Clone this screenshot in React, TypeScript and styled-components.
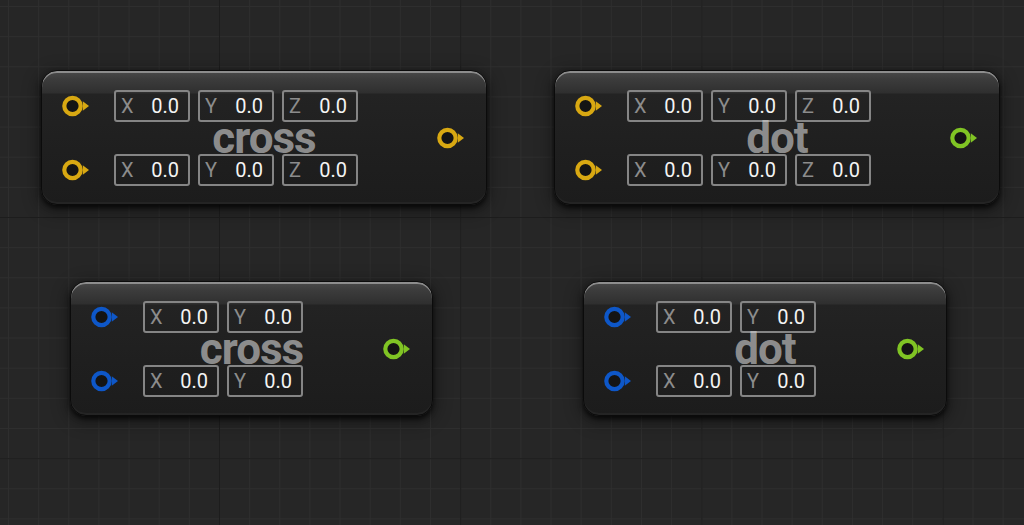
import React from "react";
import styled, { createGlobalStyle } from "styled-components";

const GlobalStyle = createGlobalStyle`
  html, body {
    margin: 0;
    padding: 0;
    background: #262626;
  }
  * { box-sizing: border-box; }
`;

const Canvas = styled.div`
  position: relative;
  width: 1024px;
  height: 525px;
  overflow: hidden;
  background-color: #262626;
  background-image:
    linear-gradient(to right, #1d1d1d 1px, transparent 1px),
    linear-gradient(to bottom, #1d1d1d 1px, transparent 1px),
    linear-gradient(to right, #2e2e2e 1px, transparent 1px),
    linear-gradient(to bottom, #2e2e2e 1px, transparent 1px);
  background-size:
    241.2px 100%,
    100% 241.2px,
    30.15px 100%,
    100% 30.15px;
  background-position:
    219px 0,
    0 217px,
    8px 0,
    0 6px;
  font-family: Roboto, "Liberation Sans", sans-serif;
`;

const GraphNode = styled.div<{ $x: number; $y: number; $w: number }>`
  position: absolute;
  left: ${(p) => p.$x}px;
  top: ${(p) => p.$y}px;
  width: ${(p) => p.$w}px;
  height: 135px;
  border-radius: 16px;
  border: 1px solid #0b0b0b;
  background: linear-gradient(
    to bottom,
    #4a4a4a 0px,
    #3c3c3c 8px,
    #2f2f2f 22px,
    #232323 23px,
    #1f1f1f 60%,
    #1c1c1c 100%
  );
  box-shadow:
    inset 0 2px 0 rgba(210, 210, 210, 0.5),
    inset 0 -2px 1px rgba(255, 255, 255, 0.04),
    0 3px 5px rgba(0, 0, 0, 0.7),
    0 4px 16px 4px rgba(0, 0, 0, 0.3);
  display: flex;
  align-items: center;
  padding: 0 21px 0 20px;
`;

const Inputs = styled.div`
  display: flex;
  flex-direction: column;
  gap: 32px;
`;

const InputRow = styled.div`
  display: flex;
  align-items: center;
`;

const Fields = styled.div`
  display: flex;
  gap: 8px;
  margin-left: 24px;
`;

const Field = styled.div`
  width: 76px;
  height: 32px;
  border: 2px solid #858585;
  border-radius: 3px;
  display: flex;
  align-items: center;
  justify-content: space-between;
  padding: 0 9px 0 5px;
  font-size: 20px;
  line-height: 1;
`;

const FieldLabel = styled.span`
  color: #8c8c8c;
`;

const FieldValue = styled.span`
  color: #f4f4f4;
`;

const Spacer = styled.div`
  flex: 1;
`;

const Title = styled.div`
  position: absolute;
  inset: 0;
  display: flex;
  align-items: center;
  justify-content: center;
  font-size: 44px;
  font-weight: 700;
  letter-spacing: -1px;
  line-height: 44px;
  color: rgba(205, 205, 205, 0.64);
  pointer-events: none;
  padding-top: 1px;
`;

const PinSvg = styled.svg`
  display: block;
  flex: none;
`;

const Pin: React.FC<{ color: string }> = ({ color }) => (
  <PinSvg width="28" height="22" viewBox="0 0 28 22">
    <circle cx="10.5" cy="11" r="8.2" fill="#141414" stroke={color} strokeWidth="4.2" />
    <polygon points="20.8,6.2 27,11 20.8,15.8" fill={color} />
  </PinSvg>
);

const COLORS = {
  yellow: "#d8a812",
  blue: "#0e57c8",
  green: "#80c424",
};

type NodeDef = {
  x: number;
  y: number;
  w: number;
  title: string;
  axes: string[];
  inColor: string;
  outColor: string;
};

const NODES: NodeDef[] = [
  { x: 41, y: 70, w: 446, title: "cross", axes: ["X", "Y", "Z"], inColor: COLORS.yellow, outColor: COLORS.yellow },
  { x: 554, y: 70, w: 446, title: "dot", axes: ["X", "Y", "Z"], inColor: COLORS.yellow, outColor: COLORS.green },
  { x: 70, y: 281, w: 363, title: "cross", axes: ["X", "Y"], inColor: COLORS.blue, outColor: COLORS.green },
  { x: 583, y: 281, w: 364, title: "dot", axes: ["X", "Y"], inColor: COLORS.blue, outColor: COLORS.green },
];

const Node: React.FC<{ def: NodeDef }> = ({ def }) => (
  <GraphNode $x={def.x} $y={def.y} $w={def.w}>
    <Inputs>
      {[0, 1].map((r) => (
        <InputRow key={r}>
          <Pin color={def.inColor} />
          <Fields>
            {def.axes.map((a) => (
              <Field key={a}>
                <FieldLabel>{a}</FieldLabel>
                <FieldValue>0.0</FieldValue>
              </Field>
            ))}
          </Fields>
        </InputRow>
      ))}
    </Inputs>
    <Spacer />
    <Pin color={def.outColor} />
    <Title>{def.title}</Title>
  </GraphNode>
);

export default function App() {
  return (
    <>
      <GlobalStyle />
      <Canvas>
        {NODES.map((n, i) => (
          <Node key={i} def={n} />
        ))}
      </Canvas>
    </>
  );
}
